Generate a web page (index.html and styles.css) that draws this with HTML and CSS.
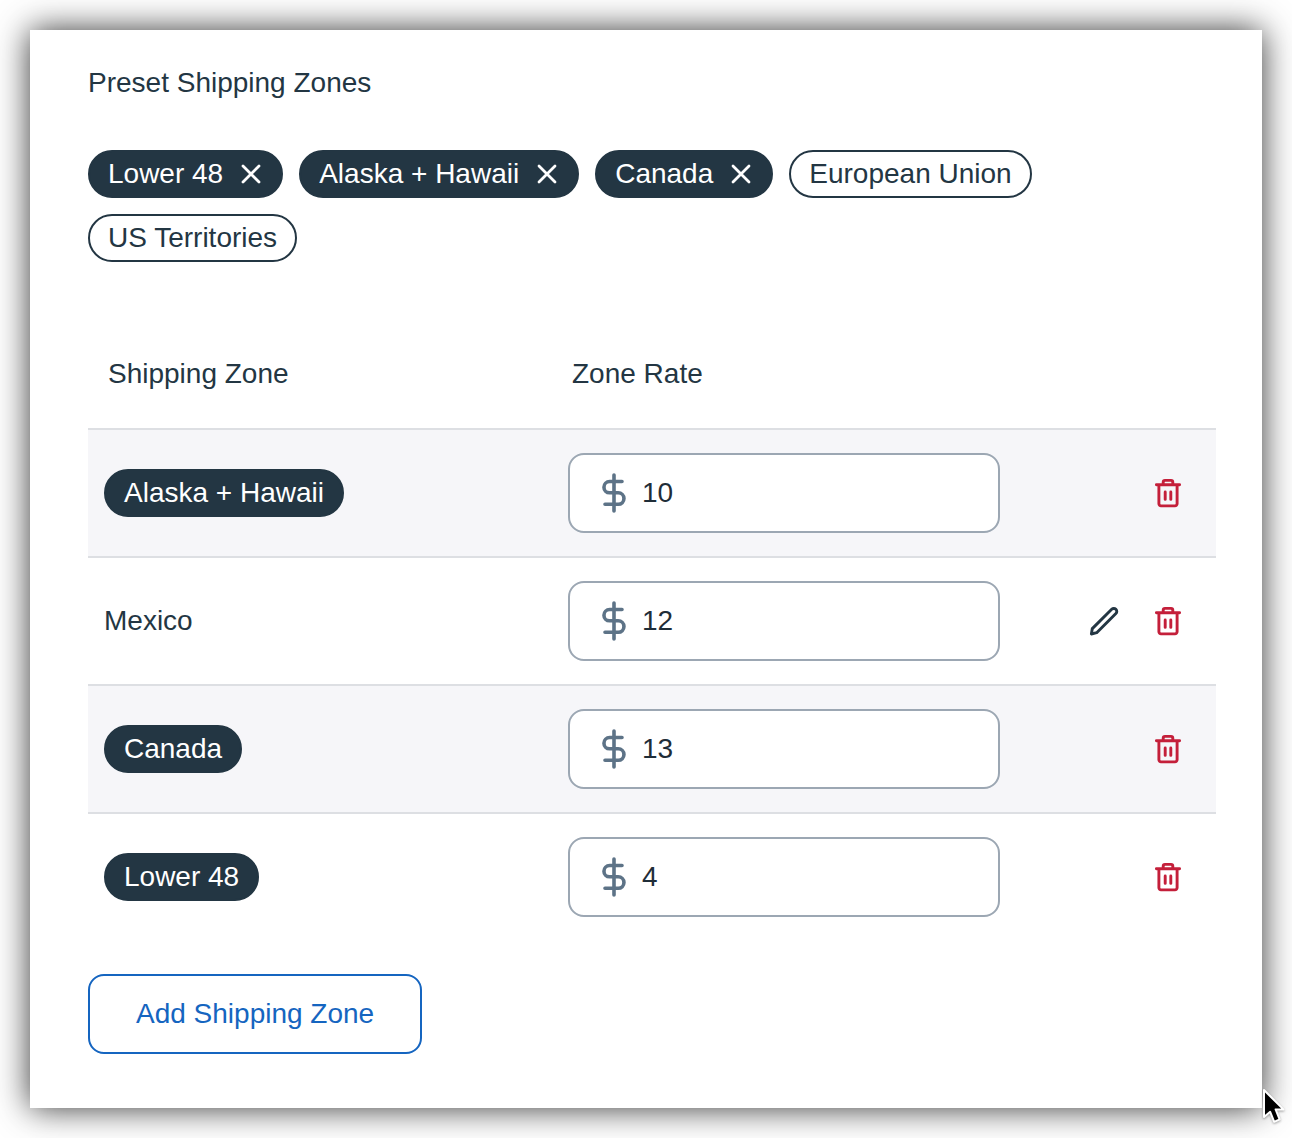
FILE: index.html
```html
<!DOCTYPE html>
<html lang="en">
<head>
<meta charset="utf-8">
<meta name="viewport" content="width=device-width, initial-scale=1">
<title>Shipping Zones</title>
<link rel="stylesheet" href="styles.css">
</head>
<body>
<svg class="sprite" aria-hidden="true">
  <symbol id="close" viewBox="0 0 24 24"><path d="M4 4L20 20M20 4L4 20" stroke-width="2.8"/></symbol>
  <symbol id="dollar" viewBox="0 0 40 40"><path d="M20 2V38M28 8.5H15.6a5.6 5.6 0 0 0 0 11.3H24.2a5.75 5.75 0 0 1 0 11.5H11" stroke-width="3.6"/></symbol>
  <symbol id="trash" viewBox="0 0 32 32"><path d="M4.4 7.8H27.6M11.2 7.8V5.2a1.8 1.8 0 0 1 1.8-1.8H19a1.8 1.8 0 0 1 1.8 1.8V7.8M6.9 7.8V26.8a2.1 2.1 0 0 0 2.1 2.1H23a2.1 2.1 0 0 0 2.1-2.1V7.8M13.2 15V22.4M18.8 15V22.4" stroke-width="2.9"/></symbol>
  <symbol id="pencil" viewBox="0 0 32 32"><path d="M3.4 29L4.3 23.6L23.7 4.3a2.95 2.95 0 0 1 4.2 4.2L8.7 27.7Z" stroke-width="2.9"/></symbol>
</svg>

<main class="card">
  <h2 class="title">Preset Shipping Zones</h2>
  <div class="presets">
    <button type="button" class="chip chip-on">Lower 48<svg class="icon-close"><use href="#close"/></svg></button>
    <button type="button" class="chip chip-on">Alaska + Hawaii<svg class="icon-close"><use href="#close"/></svg></button>
    <button type="button" class="chip chip-on">Canada<svg class="icon-close"><use href="#close"/></svg></button>
    <button type="button" class="chip">European Union</button>
    <button type="button" class="chip">US Territories</button>
  </div>

  <table class="zones">
    <colgroup><col><col><col class="col-actions"></colgroup>
    <thead>
      <tr><th scope="col">Shipping Zone</th><th scope="col">Zone Rate</th><td></td></tr>
    </thead>
    <tbody>
      <tr>
        <td><span class="chip chip-on">Alaska + Hawaii</span></td>
        <td><label class="rate"><svg class="icon-dollar"><use href="#dollar"/></svg><input type="text" inputmode="decimal" value="10" aria-label="Rate for Alaska + Hawaii"></label></td>
        <td><div class="actions"><button type="button" class="action delete" aria-label="Delete Alaska + Hawaii"><svg class="icon-action"><use href="#trash"/></svg></button></div></td>
      </tr>
      <tr>
        <td>Mexico</td>
        <td><label class="rate"><svg class="icon-dollar"><use href="#dollar"/></svg><input type="text" inputmode="decimal" value="12" aria-label="Rate for Mexico"></label></td>
        <td><div class="actions"><button type="button" class="action" aria-label="Edit Mexico"><svg class="icon-action"><use href="#pencil"/></svg></button><button type="button" class="action delete" aria-label="Delete Mexico"><svg class="icon-action"><use href="#trash"/></svg></button></div></td>
      </tr>
      <tr>
        <td><span class="chip chip-on">Canada</span></td>
        <td><label class="rate"><svg class="icon-dollar"><use href="#dollar"/></svg><input type="text" inputmode="decimal" value="13" aria-label="Rate for Canada"></label></td>
        <td><div class="actions"><button type="button" class="action delete" aria-label="Delete Canada"><svg class="icon-action"><use href="#trash"/></svg></button></div></td>
      </tr>
      <tr>
        <td><span class="chip chip-on">Lower 48</span></td>
        <td><label class="rate"><svg class="icon-dollar"><use href="#dollar"/></svg><input type="text" inputmode="decimal" value="4" aria-label="Rate for Lower 48"></label></td>
        <td><div class="actions"><button type="button" class="action delete" aria-label="Delete Lower 48"><svg class="icon-action"><use href="#trash"/></svg></button></div></td>
      </tr>
    </tbody>
  </table>

  <button type="button" class="add">Add Shipping Zone</button>

  <svg class="pointer" viewBox="0 0 24 38" aria-hidden="true"><path d="M2 2V29L8.2 23.8L12.2 33.8L17.6 31.4L13.6 21.4H21.4Z"/></svg>
</main>
</body>
</html>
```
FILE: styles.css
```css
* {
  box-sizing: border-box;
}

body {
  margin: 0;
  padding: 30px;
  background: #fff;
  color: #233643;
  font-family: "Liberation Sans", Arial, sans-serif;
  font-size: 28px;
  line-height: 32px;
}

button,
input {
  font: inherit;
  color: inherit;
}

button {
  cursor: pointer;
}

svg {
  flex: none;
  fill: none;
  stroke: currentColor;
  stroke-linecap: round;
  stroke-linejoin: round;
}

.sprite {
  display: none;
}

.card {
  position: relative;
  padding: 37px 46px 54px 58px;
  background: #fff;
  box-shadow: 0 0 32px rgba(0, 0, 0, 0.8);
}

.title {
  margin: 0 0 51px;
  font-size: 28px;
  font-weight: 400;
}

.presets {
  display: flex;
  flex-wrap: wrap;
  gap: 16px;
  margin-bottom: 58px;
}

.chip {
  display: inline-flex;
  align-items: center;
  gap: 16px;
  height: 48px;
  padding: 0 18px;
  border: 2px solid #233643;
  border-radius: 24px;
  background: #fff;
  white-space: nowrap;
}

.chip-on {
  background: #233643;
  color: #fff;
}

.icon-close {
  width: 24px;
  height: 24px;
}

.zones {
  width: 100%;
  table-layout: fixed;
  border-collapse: separate;
  border-spacing: 0;
  margin-bottom: 34px;
}

.col-actions {
  width: 200px;
}

.zones th {
  height: 108px;
  padding: 0 20px;
  font-weight: 400;
  text-align: left;
}

.zones tbody td {
  height: 128px;
  padding: 0 16px;
  border-top: 2px solid #dddfe3;
  vertical-align: middle;
}

.zones tbody tr:nth-child(odd) {
  background: #f6f6f9;
}

.zones .chip {
  vertical-align: middle;
}

.rate {
  display: flex;
  align-items: center;
  gap: 8px;
  height: 80px;
  padding: 0 24px;
  border: 2px solid #9ca7b3;
  border-radius: 16px;
  background: #fff;
}

.rate input {
  flex: 1;
  min-width: 0;
  padding: 0;
  border: 0;
  outline: 0;
  background: none;
  color: #1f2d38;
}

.icon-dollar {
  width: 40px;
  height: 40px;
  color: #5d7387;
}

.actions {
  display: flex;
  justify-content: flex-end;
}

.action {
  display: flex;
  align-items: center;
  justify-content: center;
  width: 64px;
  height: 64px;
  padding: 0;
  border: 0;
  background: none;
}

.delete {
  color: #c41f3a;
}

.icon-action {
  width: 32px;
  height: 32px;
}

.add {
  display: block;
  height: 80px;
  padding: 0 46px;
  border: 2px solid #1565c0;
  border-radius: 16px;
  background: #fff;
  color: #1565c0;
}

.pointer {
  position: absolute;
  right: -24px;
  bottom: -18px;
  width: 24px;
  height: 38px;
  fill: #000;
  stroke: #fff;
  stroke-width: 2px;
  filter: drop-shadow(0 1px 1px rgba(0, 0, 0, 0.35));
}
```
